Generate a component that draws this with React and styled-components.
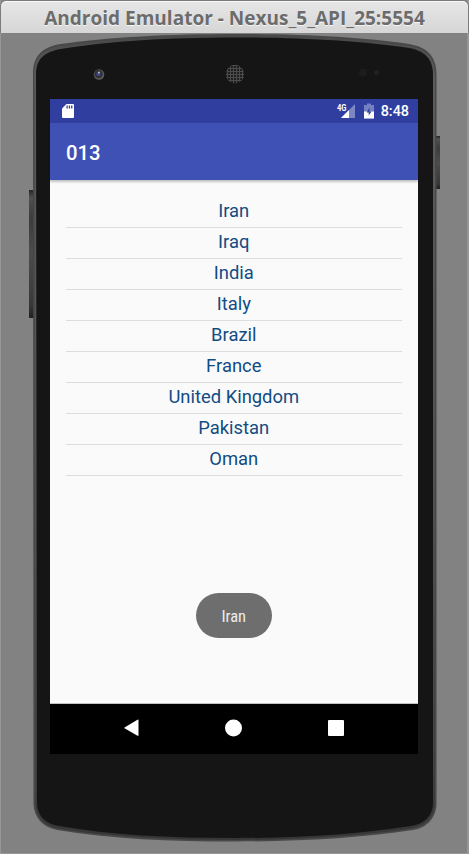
import React from "react";
import styled, { createGlobalStyle } from "styled-components";

const Global = createGlobalStyle`
  *, *::before, *::after { box-sizing: border-box; }
  body { margin: 0; background: #838383; overflow: hidden; }
`;

const Window = styled.div`
  width: 469px;
  height: 854px;
  display: flex;
  flex-direction: column;
  background: #828282;
  border: solid #979797;
  border-width: 0 2px 1px 1px;
`;

const TitleBar = styled.header`
  flex: none;
  height: 33px;
  margin: 0 -2px 0 -1px;
  padding-top: 2px;
  display: flex;
  align-items: center;
  justify-content: center;
  border: 1px solid #7c7c7c;
  border-bottom: 0;
  border-radius: 6px 6px 0 0;
  box-shadow: inset 0 1px 0 #f8f8f8;
  background: linear-gradient(#e6e6e6, #d6d6d6);
  color: #6c6c6c;
  font: 700 19.02px/30px "Open Sans", "Noto Sans", sans-serif;
  text-shadow: 0 1px 0 #f5f5f5;
  white-space: nowrap;
`;

const Device = styled.main`
  position: relative;
  flex: 1;
  display: flex;
  padding: 66px 0 0 49px;
`;

const Shell = styled.svg`
  position: absolute;
  left: -1px;
  top: 0;
`;

const Screen = styled.section`
  position: relative;
  width: 368px;
  height: 655px;
  display: flex;
  flex-direction: column;
  background: #fafafa;
  font-family: Roboto, sans-serif;
`;

const StatusBar = styled.div`
  flex: none;
  height: 24px;
  padding: 0 9px 0 12px;
  display: flex;
  align-items: center;
  background: #303f9f;
  color: #fff;
`;

const SignalIcon = styled.svg`
  margin-left: auto;
`;

const BatteryIcon = styled.svg`
  margin-left: 8px;
`;

const Clock = styled.time`
  margin-left: 7px;
  padding-top: 2px;
  font-size: 14.4px;
  font-weight: 500;
  line-height: 24px;
`;

const AppBar = styled.h1`
  flex: none;
  height: 57px;
  margin: 0;
  padding: 2px 16px 0;
  background: #3f51b5;
  box-shadow: 0 2px 2px rgba(0, 0, 0, 0.22);
  color: #fff;
  font-size: 20.3px;
  font-weight: 500;
  line-height: 57px;
`;

const CountryList = styled.ul`
  flex: 1;
  list-style: none;
  margin: 0;
  padding: 17px 16.5px 0 16px;
  border-bottom: 1px solid #c4c4c4;
`;

const Country = styled.li`
  height: 31px;
  border-bottom: 1px solid #dedede;
  color: #114c83;
  font-size: 18.4px;
  line-height: 27px;
  text-align: center;
`;

const Toast = styled.div`
  position: absolute;
  left: 146px;
  top: 494px;
  width: 75.5px;
  height: 45px;
  border-radius: 23px;
  background: #6e6e6e;
  color: #ececec;
  font-family: "Roboto Condensed", Roboto, sans-serif;
  font-size: 16.5px;
  line-height: 48px;
  text-align: center;
`;

const NavBar = styled.nav`
  flex: none;
  height: 50px;
  padding: 0 72px 2px;
  display: flex;
  align-items: center;
  justify-content: space-between;
  background: #000;
`;

const NavButton = styled.button`
  width: 20px;
  height: 20px;
  padding: 0;
  border: 0;
  background: none;
  display: flex;
`;

const countries = ["Iran", "Iraq", "India", "Italy", "Brazil", "France", "United Kingdom", "Pakistan", "Oman"];

function DeviceShell() {
  return (
    <Shell width="469" height="820" viewBox="0 33 469 820" aria-hidden="true">
      <defs>
        <linearGradient id="key" x1="0" y1="0" x2="0" y2="1">
          <stop offset="0" stopColor="#242424" />
          <stop offset=".06" stopColor="#505050" />
          <stop offset=".22" stopColor="#3c3c3c" />
          <stop offset=".5" stopColor="#4c4c4c" />
          <stop offset=".9" stopColor="#383838" />
          <stop offset="1" stopColor="#202020" />
        </linearGradient>
        <linearGradient id="rim" x1="0" y1="0" x2="0" y2="1">
          <stop offset="0" stopColor="#484848" />
          <stop offset=".05" stopColor="#585c5e" />
          <stop offset=".6" stopColor="#4c5052" />
          <stop offset=".9" stopColor="#404040" />
          <stop offset="1" stopColor="#363636" />
        </linearGradient>
        <pattern id="mesh" width="3" height="3" patternUnits="userSpaceOnUse">
          <rect width="3" height="3" fill="#4c4c4c" />
          <rect width="2" height="2" fill="#1e1e1e" />
        </pattern>
      </defs>
      <rect x="29" y="190" width="5" height="128" fill="url(#key)" />
      <rect x="436" y="136" width="4" height="53" fill="url(#key)" />
      <path d="M33 74C33 55 43 47 61 44C110 37 170 34 235 34C300 34 362 37 409 44C427 47 436.500 56 436.500 74V804C436 818 427 828 413 830C360 838 300 841.500 235 841.500C170 841.500 110 839 57 830C43 827 34 818 33.500 804Z" fill="#484848" />
      <path d="M34.500 74C34.500 57 43 49 61 46C110 39 170 35.500 235 35.500C300 35.500 362 39 409 46C426 49 435 57 435 74V804C435 817 426 826 412 828.500C360 836 300 840 235 840C170 840 110 837 57 828.500C44 826 35.500 817 35.500 804Z" fill="url(#rim)" />
      <path d="M36 75C36 59 44 52 61 49C110 41 170 37.500 235 37.500C300 37.500 362 41 409 48C425 51 433 59 433 75V803C433 816 424 824 411 826C360 834 300 838 235 838C170 838 110 835 59 826C46 824 37 816 37 803Z" fill="#151515" />
      <circle cx="99" cy="74.500" r="5.300" fill="#5c5c5c" />
      <circle cx="98.600" cy="74" r="4.200" fill="#303036" />
      <circle cx="98.500" cy="74" r="2" fill="#40489a" />
      <circle cx="99" cy="72.500" r="1" fill="#bbb" />
      <circle cx="235" cy="74" r="9.200" fill="url(#mesh)" />
      <circle cx="363" cy="72.500" r="4" fill="#1d1d1d" />
      <circle cx="376.500" cy="72.500" r="2.500" fill="#222" />
    </Shell>
  );
}

export default function App() {
  return (
    <>
      <Global />
      <Window>
        <TitleBar>Android Emulator - Nexus_5_API_25:5554</TitleBar>
        <Device>
          <DeviceShell />
          <Screen>
            <StatusBar>
              <svg width="12" height="14" viewBox="0 0 12 14">
                <path d="M4.500 0H11a1 1 0 0 1 1 1v12a1 1 0 0 1-1 1H1a1 1 0 0 1-1-1V4.500Z" fill="#fff" />
                <path d="M4.500 1.500h1.300v3H4.500zM6.800 1.500h1.300v3H6.800zM9.100 1.500h1.300v3H9.100z" fill="#303f9f" />
              </svg>
              <SignalIcon width="19" height="16" viewBox="0 0 19 16">
                <path d="M18 1V15H4Z" fill="#7d87c4" />
                <path d="M12 7V15H4Z" fill="#fff" />
                <text x="0" y="7.500" fill="#fff" fontFamily="Roboto" fontSize="9.5" fontWeight="700" textLength="9.500" lengthAdjust="spacingAndGlyphs">4G</text>
              </SignalIcon>
              <BatteryIcon width="10" height="16" viewBox="0 0 10 16">
                <path d="M3 .5H7V2H10V15.500H0V2H3Z" fill="#7580c0" />
                <path d="M0 8.500H10V15.500H0Z" fill="#fff" />
                <path d="M5.500 4.500V8.500H7.500L4.700 12.500V9.500H2.700Z" fill="#303f9f" />
              </BatteryIcon>
              <Clock>8:48</Clock>
            </StatusBar>
            <AppBar>013</AppBar>
            <CountryList>
              {countries.map((name) => <Country key={name}>{name}</Country>)}
            </CountryList>
            <NavBar>
              <NavButton aria-label="Back">
                <svg width="20" height="20" viewBox="0 0 20 20"><path d="M2.500 9.600 15.500 1.700Q16.500 1.200 16.500 2.200V17.200Q16.500 18.200 15.500 17.700L2.500 10.200Q2 9.900 2.500 9.600Z" fill="#fff" /></svg>
              </NavButton>
              <NavButton aria-label="Home">
                <svg width="20" height="20" viewBox="0 0 20 20"><circle cx="9.500" cy="10" r="8.500" fill="#fff" /></svg>
              </NavButton>
              <NavButton aria-label="Overview">
                <svg width="20" height="20" viewBox="0 0 20 20"><rect x="2" y="2" width="16" height="16" rx="1" fill="#fff" /></svg>
              </NavButton>
            </NavBar>
            <Toast role="status">Iran</Toast>
          </Screen>
        </Device>
      </Window>
    </>
  );
}
